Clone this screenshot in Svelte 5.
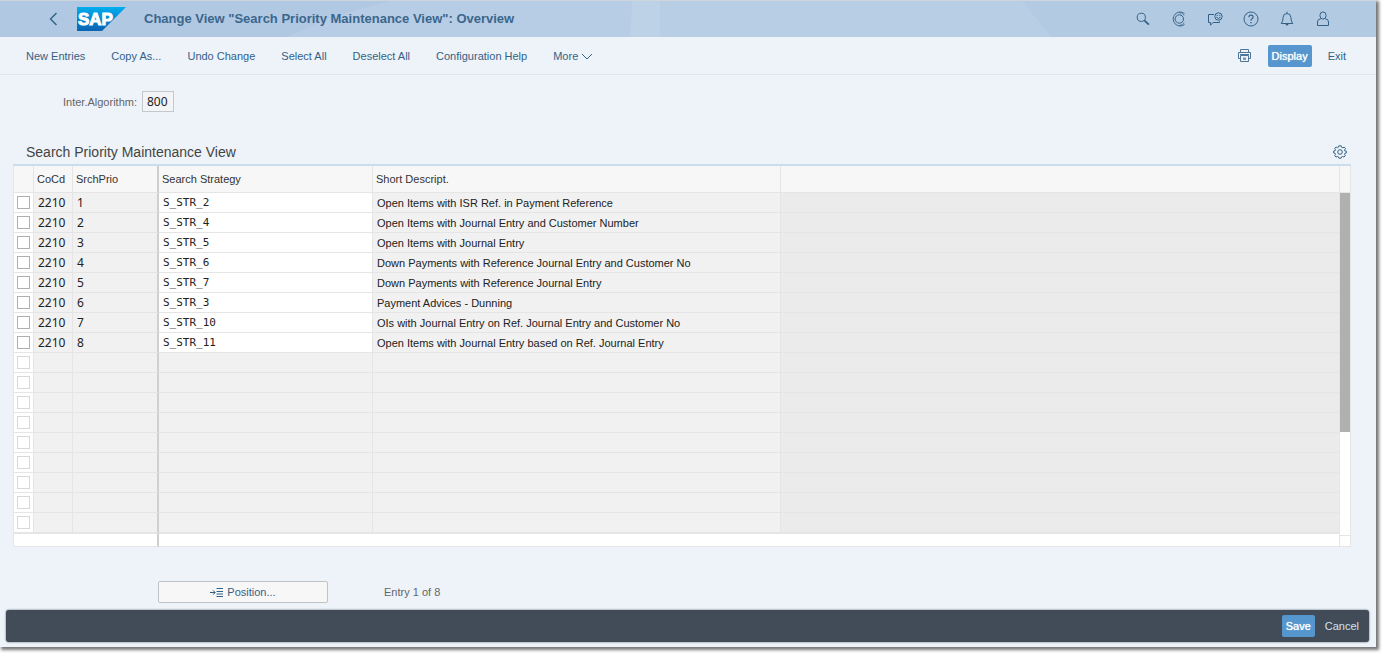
<script>
  const actions = ['New Entries', 'Copy As...', 'Undo Change', 'Select All', 'Deselect All', 'Configuration Help'];
  const entries = [
    ['1', 'S_STR_2', 'Open Items with ISR Ref. in Payment Reference'],
    ['2', 'S_STR_4', 'Open Items with Journal Entry and Customer Number'],
    ['3', 'S_STR_5', 'Open Items with Journal Entry'],
    ['4', 'S_STR_6', 'Down Payments with Reference Journal Entry and Customer No'],
    ['5', 'S_STR_7', 'Down Payments with Reference Journal Entry'],
    ['6', 'S_STR_3', 'Payment Advices - Dunning'],
    ['7', 'S_STR_10', 'OIs with Journal Entry on Ref. Journal Entry and Customer No'],
    ['8', 'S_STR_11', 'Open Items with Journal Entry based on Ref. Journal Entry']
  ].map(([prio, strategy, text]) => ({ code: '2210', prio, strategy, text }));
  const emptyRows = Array.from({ length: 9 }, (_, i) => entries.length + i + 1);

  let algorithm = $state('800');
</script>

<div class="page">
  <header class="shell">
    <svg class="shapes" viewBox="0 0 1376 36" preserveAspectRatio="none" aria-hidden="true">
      <path d="M0 0H390Q330 14 288 36H0Z" fill="#a9c5e0" opacity=".3" />
      <path d="M390 0H632L630 36H288Q330 14 390 0Z" fill="#bacfe7" opacity=".5" />
      <path d="M632 0H660V36H630Z" fill="#c3d6ea" opacity=".6" />
      <path d="M660 0H1022L1052 36H660Z" fill="#bdd1e8" opacity=".5" />
    </svg>
    <button class="icon back" aria-label="Back">
      <svg width="16" height="16" viewBox="0 0 16 16"><path d="M11.500 2 5.500 8l6 6" stroke-width="1.4" /></svg>
    </button>
    <svg class="logo" width="49" height="24" viewBox="0 0 49 24" role="img" aria-label="SAP">
      <defs>
        <linearGradient id="blue" x1="0" y1="0" x2="0" y2="1">
          <stop offset="0" stop-color="#00aeef" />
          <stop offset="1" stop-color="#0a62b2" />
        </linearGradient>
      </defs>
      <path d="M0 0H49L25 24H0Z" fill="url(#blue)" />
      <text x="1" y="18" font-size="17" stroke="#fff">SAP</text>
    </svg>
    <h1>Change View "Search Priority Maintenance View": Overview</h1>
    <nav class="tools" aria-label="Shell">
      <button class="icon" aria-label="Search">
        <svg width="16" height="16" viewBox="0 0 16 16"><circle cx="6.3" cy="6.3" r="4.1" /><path d="m9.300 9.300 4.600 4.400" stroke-width="1.800" /></svg>
      </button>
      <button class="icon" aria-label="CoPilot">
        <svg width="16" height="16" viewBox="0 0 16 16"><path d="M13.500 2.500A7 7 0 1 0 13.500 13.500" stroke-width=".9" /><path d="M8 1.500Q12 1.500 13.200 4.600M13.200 11.400Q12 14.500 8 14.500" stroke-width=".7" /><circle cx="8.300" cy="8" r="4.200" /></svg>
      </button>
      <button class="icon" aria-label="Feedback">
        <svg width="16" height="16" viewBox="0 0 16 16"><path d="M7 3.500H1.500V11.500H3.500V14.200L6 11.500H12.500V10.300" /><circle cx="11.500" cy="5.500" r="3.700" /><path d="M9.300 6.100Q11.500 8.800 13.700 6.100M10.200 3.800v1.200M12.800 3.800v1.200" /></svg>
      </button>
      <button class="icon" aria-label="Help">
        <svg width="16" height="16" viewBox="0 0 16 16"><circle cx="8" cy="8" r="7" /><path d="M5.900 6.200Q5.900 4.200 8 4.200T10.100 6.100Q10.100 7.200 9 7.800T8 9.600" stroke-width="1.200" /><path d="M8 11v1.300" stroke-width="1.400" /></svg>
      </button>
      <button class="icon" aria-label="Notifications">
        <svg width="16" height="16" viewBox="0 0 16 16"><path d="M8 .7V2.200M2.200 12.500Q4.100 10.500 4.100 6.500Q4.100 2.500 8 2.500T11.900 6.500Q11.900 10.500 13.800 12.500Z" /><path d="M6.500 12.700Q6.500 14.600 8 14.600T9.500 12.700Z" fill="#346187" stroke="none" /></svg>
      </button>
      <button class="icon" aria-label="User">
        <svg width="16" height="16" viewBox="0 0 16 16"><ellipse cx="8" cy="4.500" rx="3.100" ry="3.600" /><path d="M5.800 7.800Q2.500 8 2.500 11V14.500H13.500V11Q13.500 8 10.200 7.800" /></svg>
      </button>
    </nav>
  </header>

  <div class="toolbar">
    {#each actions as action}
      <button class="link">{action}</button>
    {/each}
    <button class="link">More<svg width="12" height="12" viewBox="0 0 12 12"><path d="m1 4 5 5 5-5" /></svg></button>
    <div class="end">
      <button class="icon" aria-label="Print">
        <svg width="15" height="15" viewBox="0 0 15 15"><path d="M3.500 4V1.500H11.500V4M3 10.500H1.500V4.500H13.500V10.500H12M3.500 7.500H11.500V13.500H3.500ZM3 6.500H12" stroke="#4f7699" /><path d="M6 9.500H9V12H6Z" fill="#7899b8" stroke="none" /></svg>
      </button>
      <button class="primary">Display</button>
      <button class="link">Exit</button>
    </div>
  </div>

  <main>
    <div class="field">
      <label for="algorithm">Inter.Algorithm:</label>
      <input id="algorithm" bind:value={algorithm} />
    </div>

    <section>
      <div class="caption">
        <h2>Search Priority Maintenance View</h2>
        <button class="icon" aria-label="Table settings">
          <svg width="14" height="14" viewBox="0 0 14 14"><path d="M5.800 .8H8.200L8.600 2.300 9.900 2.800 11.200 2.100 12.500 3.500 11.500 5.100 11.900 6 13.300 6.200V8L11.900 8.300 11.500 9.300 12.300 10.700 10.900 12.100 9.500 11.400 8.600 11.800 8.100 13.200H5.900L5.400 11.800 4.400 11.400 3 12.100 1.700 10.700 2.500 9.300 2.100 8.300 .7 8V6L2.100 5.700 2.500 4.800 1.700 3.400 3.100 2 4.500 2.700 5.400 2.300Z" /><circle cx="7" cy="7" r="2.300" /></svg>
        </button>
      </div>
      <div class="grid">
        <table>
          <colgroup>
            <col class="c-check" /><col class="c-code" /><col class="c-prio" /><col class="c-strategy" /><col class="c-text" /><col />
          </colgroup>
          <thead>
            <tr><td></td><th>CoCd</th><th class="fixed">SrchPrio</th><th>Search Strategy</th><th>Short Descript.</th><td></td></tr>
          </thead>
          <tbody>
            {#each entries as row}
              <tr>
                <td class="pick"><input type="checkbox" aria-label="Select entry {row.prio}" /></td>
                <td class="num">{row.code}</td>
                <td class="num fixed">{row.prio}</td>
                <td class="code">{row.strategy}</td>
                <td class="text">{row.text}</td>
                <td class="rest"></td>
              </tr>
            {/each}
            {#each emptyRows as n}
              <tr>
                <td class="pick"><input type="checkbox" disabled aria-label="Select row {n}" /></td>
                <td></td><td class="fixed"></td><td></td><td></td><td class="rest"></td>
              </tr>
            {/each}
          </tbody>
          <tfoot>
            <tr><td colspan="3" class="fixed"></td><td colspan="3"></td></tr>
          </tfoot>
        </table>
        <div class="scroll"><div class="cap"></div><div class="track"><div class="thumb"></div></div><div class="corner"></div></div>
      </div>
    </section>

    <div class="position">
      <button class="jump">
        <svg width="13" height="11" viewBox="0 0 13 11"><path d="M0 5.500H5M3 3.300 5.200 5.500 3 7.700M6.500 1.500H13M6.500 4.500H13M6.500 7H13M6.500 9.500H13" /></svg>Position...
      </button>
      <span>Entry 1 of 8</span>
    </div>
  </main>

  <footer>
    <button class="primary">Save</button>
    <button class="cancel">Cancel</button>
  </footer>
</div>

<style>
  :global(body) { margin: 0; background: #fff; }
  .page {
    box-sizing: border-box;
    margin: 0 9px 9px 0;
    padding-bottom: 5px;
    border-top: 1px solid #cfd5dc;
    background: #edf3f8;
    box-shadow: 2px 2px 3px 1px #777;
    font-family: "Liberation Sans", Arial, sans-serif;
    font-size: 11px;
    line-height: 16px;
    color: #333;
  }
  button { margin: 0; padding: 0; border: 0; background: none; font: inherit; color: #346187; cursor: pointer; }
  svg { display: block; fill: none; stroke: #346187; }
  .icon { display: flex; }
  .shell { position: relative; display: flex; align-items: center; height: 36px; padding: 0 45px; background: #b3cae3; }
  .shell > :not(.shapes) { position: relative; }
  .shapes { position: absolute; inset: 0; width: 100%; height: 100%; stroke: none; }
  .logo { margin: 0 18px 0 16px; stroke: none; }
  .logo text { fill: #fff; font-family: "Liberation Sans", sans-serif; font-weight: 700; }
  h1 { margin: 0; font-size: 13px; font-weight: 700; color: #3b668c; white-space: nowrap; }
  .tools { display: flex; gap: 20px; margin-left: auto; }
  .toolbar { display: flex; align-items: center; gap: 26px; height: 37px; padding: 0 30px 0 26px; border-bottom: 1px solid #dce5ef; }
  .link { display: flex; align-items: center; gap: 3px; white-space: nowrap; }
  .end { display: flex; align-items: center; gap: 16px; margin-left: auto; }
  .primary { height: 22px; padding: 0 4px; border-radius: 2px; background: #5496cd; color: #fff; text-shadow: 0 0 1px #fff; }
  main { padding: 16px 25px 7px 13px; }
  .field { display: flex; align-items: center; gap: 5px; padding-left: 50px; color: #666; }
  .field input { box-sizing: border-box; width: 32px; height: 21px; padding: 0 4px; border: 1px solid #c4c8cc; border-radius: 0; background: #f2f4f6; font: 12px "Noto Sans", sans-serif; color: #222; }
  .caption { display: flex; align-items: center; justify-content: space-between; height: 24px; margin-top: 28px; padding: 0 4px 0 13px; }
  h2 { margin: 0; font-size: 14px; font-weight: 400; color: #444; }
  .grid { display: flex; border-top: 2px solid #cbdceb; }
  table { flex: 1; table-layout: fixed; border-collapse: separate; border-spacing: 0; border-left: 1px solid #e5e5e5; }
  .c-check { width: 20px; }
  .c-code { width: 39px; }
  .c-prio { width: 86px; }
  .c-strategy { width: 214px; }
  .c-text { width: 408px; }
  th, td { box-sizing: border-box; height: 20px; padding: 0 4px; border-right: 1px solid #e5e5e5; border-bottom: 1px solid #e5e5e5; background: #f1f1f1; font-weight: 400; text-align: left; white-space: nowrap; line-height: 16px; }
  thead th, thead td { height: 27px; padding: 0 3px; background: #f7f7f7; }
  td.pick { padding: 0 0 0 3px; background: #fff; }
  .pick input { display: block; box-sizing: border-box; width: 13px; height: 13px; margin: 0; appearance: none; border: 1px solid #b0b0b0; background: #fff; }
  .pick input:disabled { border-color: #d8d8d8; }
  .num { font-family: "Noto Sans", sans-serif; font-size: 12px; color: #222; }
  .code { background: #fff; font-family: "DejaVu Sans Mono", monospace; color: #222; }
  .text { color: #222; }
  td.rest { background: #ebebeb; }
  th.fixed, td.fixed { border-right: 2px solid #cfcfcf; }
  tfoot td { height: 14px; border-top: 1px solid #e5e5e5; background: #fff; }
  .scroll { display: flex; flex-direction: column; width: 10px; border-right: 1px solid #e5e5e5; }
  .cap { height: 26px; border-bottom: 1px solid #e5e5e5; background: #f7f7f7; }
  .track { flex: 1; background: #fff; }
  .thumb { height: 70%; background: #b0b0b0; }
  .corner { height: 10px; border: solid #e5e5e5; border-width: 1px 0; background: #fff; }
  .position { display: flex; align-items: center; gap: 56px; margin-top: 34px; padding-left: 145px; color: #666; }
  .jump { display: flex; align-items: center; justify-content: center; gap: 4px; box-sizing: border-box; width: 170px; height: 22px; border: 1px solid #bfc3c7; border-radius: 2px; background: #f7f7f7; }
  footer { display: flex; align-items: center; justify-content: flex-end; gap: 10px; height: 32px; margin: 0 7px 0 6px; padding: 0 10px; border-radius: 3px; background: #414c58; box-shadow: 0 0 2px #414c58; }
  .cancel { color: #cfe3f5; }
</style>
